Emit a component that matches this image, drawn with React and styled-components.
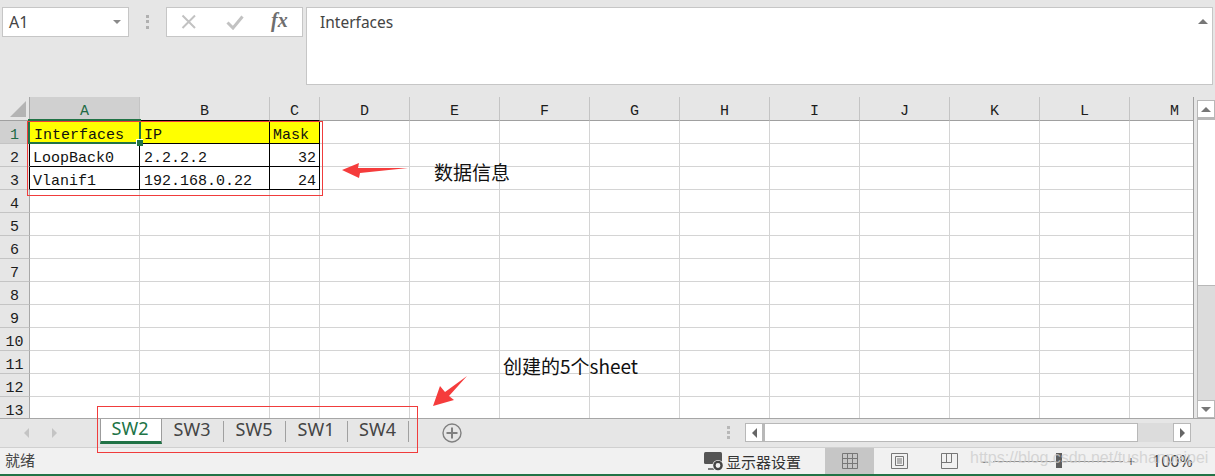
import React from "react";
import styled, { createGlobalStyle } from "styled-components";

const columns = [
  { label: "A", width: 110, active: true },
  { label: "B", width: 130, table: true },
  { label: "C", width: 50, table: true },
  { label: "D", width: 90 },
  { label: "E", width: 90 },
  { label: "F", width: 90 },
  { label: "G", width: 90 },
  { label: "H", width: 90 },
  { label: "I", width: 90 },
  { label: "J", width: 90 },
  { label: "K", width: 90 },
  { label: "L", width: 90 },
  { label: "M", width: 90 },
];

const tableRows = [
  [{ text: "Interfaces", fill: true, pad: 4 }, { text: "IP", fill: true, pad: 4 }, { text: "Mask", fill: true }],
  [{ text: "LoopBack0" }, { text: "2.2.2.2", pad: 4 }, { text: "32", right: true }],
  [{ text: "Vlanif1" }, { text: "192.168.0.22", pad: 4 }, { text: "24", right: true }],
];

const rowNumbers = [1, 2, 3, 4, 5, 6, 7, 8, 9, 10, 11, 12, 13];
const sheets = ["SW2", "SW3", "SW5", "SW1", "SW4"];

const GlobalStyle = createGlobalStyle`
  html, body {
    margin: 0;
    padding: 0;
    background: #e6e6e6;
  }
  * {
    box-sizing: border-box;
  }
`;

const Window = styled.div`
  position: relative;
  width: 1215px;
  height: 476px;
  overflow: hidden;
  display: flex;
  flex-direction: column;
  background: #e6e6e6;
  font-family: "Noto Sans", "Noto Sans CJK SC", sans-serif;
`;

const FormulaBar = styled.div`
  height: 97px;
  flex-shrink: 0;
  display: flex;
  align-items: flex-start;
  padding: 7px 2px 0 2px;
`;

const NameBox = styled.div`
  width: 127px;
  height: 30px;
  background: #fff;
  border: 1px solid #c6c6c6;
  display: flex;
  align-items: center;
  justify-content: space-between;
  padding: 0 7px 0 6px;
  font-size: 16px;
  color: #444;
`;

const DownCaret = styled.span`
  border-left: 4px solid transparent;
  border-right: 4px solid transparent;
  border-top: 4px solid #8a8a8a;
`;

const Grip = styled.div`
  width: 3px;
  height: 14px;
  margin: 8px 17px 0 17px;
  flex-shrink: 0;
  background: repeating-linear-gradient(#b0b0b0 0 3px, transparent 3px 5.5px);
`;

const FormulaButtons = styled.div`
  width: 137px;
  height: 30px;
  background: #fff;
  border: 1px solid #c6c6c6;
  display: flex;
  align-items: center;
  padding-left: 14px;
  gap: 29px;
`;

const FxLabel = styled.span`
  font-family: "Liberation Serif", serif;
  font-style: italic;
  font-weight: bold;
  font-size: 20px;
  color: #6e6e6e;
  margin-left: -2px;
  margin-top: -3px;
`;

const FormulaInput = styled.div`
  position: relative;
  width: 907px;
  height: 78px;
  margin-left: 3px;
  background: #fff;
  border: 1px solid #c6c6c6;
  padding: 4px 13px;
  font-size: 15.5px;
  line-height: 20px;
  color: #444;
`;

const CollapseCaret = styled.span`
  position: absolute;
  top: 11px;
  right: 4px;
  border-left: 5px solid transparent;
  border-right: 5px solid transparent;
  border-bottom: 5px solid #777;
`;

const Body = styled.div`
  height: 321px;
  flex-shrink: 0;
  display: flex;
`;

const Sheet = styled.div`
  width: 1194px;
  flex-shrink: 0;
  overflow: hidden;
  border-right: 1px solid #a0a0a0;
`;

const Row = styled.div`
  display: flex;
  height: ${(p) => p.$height}px;
`;

const Corner = styled.div`
  position: relative;
  width: 30px;
  flex-shrink: 0;
  border-right: 1px solid #a8a8a8;
  border-bottom: 1px solid #a0a0a0;
  &::after {
    content: "";
    position: absolute;
    right: 3px;
    bottom: 3px;
    border-left: 16px solid transparent;
    border-bottom: 16px solid #b4b4b4;
  }
`;

const ColumnHead = styled.div`
  width: ${(p) => p.$width}px;
  flex-shrink: 0;
  display: flex;
  align-items: center;
  justify-content: center;
  padding-top: 5px;
  font-family: "Liberation Mono", monospace;
  font-size: 15px;
  color: ${(p) => (p.$active ? "#1f6b45" : "#1c1c1c")};
  background: ${(p) => (p.$active ? "#d0d0d0" : "transparent")};
  border-right: 1px solid #c4c4c4;
  border-bottom: 1px solid ${(p) => (p.$active ? "#217346" : p.$table ? "#000" : "#a0a0a0")};
`;

const RowHead = styled.div`
  width: 30px;
  flex-shrink: 0;
  display: flex;
  align-items: center;
  justify-content: center;
  padding-top: 6px;
  font-family: "Liberation Mono", monospace;
  font-size: 15px;
  color: ${(p) => (p.$active ? "#1f6b45" : "#1c1c1c")};
  background: ${(p) => (p.$active ? "#d0d0d0" : "#e6e6e6")};
  border-right: 1px solid ${(p) => (p.$table ? "#000" : "#a8a8a8")};
  border-bottom: 1px solid #c4c4c4;
`;

const Cell = styled.div`
  position: relative;
  width: ${(p) => p.$width}px;
  flex-shrink: 0;
  display: flex;
  align-items: center;
  justify-content: ${(p) => (p.$right ? "flex-end" : "flex-start")};
  padding: 6px ${(p) => (p.$right ? 3 : 0)}px 0 ${(p) => p.$pad}px;
  font-family: "Liberation Mono", monospace;
  font-size: 15px;
  white-space: pre;
  color: #111;
  background: ${(p) => (p.$fill ? "#ffff00" : "#fff")};
  border-right: 1px solid ${(p) => (p.$table ? "#000" : "#d4d4d4")};
  border-bottom: 1px solid ${(p) => (p.$table ? "#000" : "#d4d4d4")};
`;

const Selection = styled.div`
  position: absolute;
  left: 28px;
  top: 119px;
  width: 113px;
  height: 25px;
  border: 2px solid #217346;
  pointer-events: none;
  &::after {
    content: "";
    position: absolute;
    right: -4px;
    bottom: -4px;
    width: 6px;
    height: 6px;
    background: #217346;
    border: 1px solid #fff;
    border-right: 0;
    border-bottom: 0;
  }
`;

const ScrollColumn = styled.div`
  width: 18px;
  margin-left: 3px;
  margin-top: 3px;
  display: flex;
  flex-direction: column;
  background: #dcdcdc;
  border-left: 1px solid #b8b8b8;
`;

const ScrollButton = styled.div`
  display: flex;
  align-items: center;
  justify-content: center;
  flex-shrink: 0;
  background: #fff;
  width: ${(p) => p.$width || 18}px;
  height: ${(p) => p.$height || 18}px;
  border: 1px solid #b8b8b8;
  border-left-width: ${(p) => (p.$flush ? 0 : 1)}px;
`;

const VerticalThumb = styled.div`
  height: 168px;
  background: #fff;
  border-top: 2px solid #b8b8b8;
  border-bottom: 1px solid #b8b8b8;
`;

const ScrollFill = styled.div`
  flex: 1;
`;

const Arrow = styled.span`
  border-style: solid;
  border-color: transparent;
  ${(p) => p.$dir === "up" && "border-width: 0 5px 5px 5px; border-bottom-color: #777;"}
  ${(p) => p.$dir === "down" && "border-width: 5px 5px 0 5px; border-top-color: #777;"}
  ${(p) => p.$dir === "left" && `border-width: 5px 5px 5px 0; border-right-color: ${p.$color || "#666"};`}
  ${(p) => p.$dir === "right" && `border-width: 5px 0 5px 5px; border-left-color: ${p.$color || "#666"};`}
`;

const TabBar = styled.div`
  height: 29px;
  flex-shrink: 0;
  display: flex;
  align-items: flex-start;
  border-top: 1px solid #a6a6a6;
`;

const TabNav = styled.div`
  width: 100px;
  flex-shrink: 0;
  display: flex;
  align-items: center;
  gap: 23px;
  height: 28px;
  padding-left: 24px;
`;

const Tabs = styled.div`
  display: flex;
  height: 25px;
`;

const Tab = styled.div`
  position: relative;
  width: ${(p) => (p.$last ? 61 : 62)}px;
  height: 25px;
  display: flex;
  align-items: center;
  justify-content: center;
  padding: 0 2px 5px 0;
  font-size: 18px;
  color: ${(p) => (p.$active ? "#217346" : "#444")};
  background: ${(p) => (p.$active ? "#fff" : "transparent")};
  border-left: ${(p) => (p.$active ? "1px solid #9c9c9c" : "0")};
  border-right: ${(p) => (p.$active ? "1px solid #9c9c9c" : "0")};
  border-bottom: ${(p) => (p.$active ? "3px solid #217346" : "0")};
  &::after {
    content: "";
    display: ${(p) => (p.$active ? "none" : "block")};
    position: absolute;
    right: 0;
    top: 2px;
    width: 1px;
    height: 21px;
    background: #a0a0a0;
  }
`;

const AddSheet = styled.div`
  width: 20px;
  height: 20px;
  margin: 4px 0 0 33px;
  flex-shrink: 0;
  color: #777;
`;

const SplitDots = styled(Grip)`
  width: 3px;
  height: 13px;
  margin: 7px 15px 0 265px;
  background: repeating-linear-gradient(#b8b8b8 0 3px, transparent 3px 5px);
`;

const HorizontalScroll = styled.div`
  width: 446px;
  height: 19px;
  margin-top: 4px;
  display: flex;
  background: #dcdcdc;
`;

const HorizontalThumb = styled.div`
  width: 375px;
  background: #fff;
  border: 1px solid #b8b8b8;
  border-left-width: 2px;
`;

const StatusBar = styled.div`
  height: 27px;
  flex-shrink: 0;
  display: flex;
  align-items: center;
  background: #f1f1f1;
  border-top: 1px solid #d0d0d0;
  font-size: 15px;
  color: #444;
`;

const StatusLabel = styled.div`
  padding-left: 5px;
  padding-bottom: 3px;
  width: 704px;
  flex-shrink: 0;
`;

const Monitor = styled.div`
  display: flex;
  align-items: center;
  width: 121px;
  flex-shrink: 0;
  gap: 1px;
  font-size: 15px;
  color: #333;
`;

const ViewButton = styled.div`
  width: ${(p) => p.$width}px;
  height: 26px;
  flex-shrink: 0;
  display: flex;
  align-items: center;
  justify-content: center;
  background: ${(p) => (p.$active ? "#c6c6c6" : "transparent")};
`;

const ZoomControl = styled.div`
  display: flex;
  align-items: center;
  margin-left: 6px;
  font-size: 16px;
  color: #444;
`;

const ZoomGlyph = styled.span`
  width: 10px;
  color: #666;
  text-align: center;
  font-size: 14px;
`;

const ZoomTrack = styled.div`
  position: relative;
  width: 130px;
  height: 1px;
  margin: 0 3px;
  background: #8c8c8c;
  &::after {
    content: "";
    position: absolute;
    left: 63px;
    top: -8px;
    width: 6px;
    height: 15px;
    background: #5e5e5e;
  }
`;

const ZoomValue = styled.span`
  margin-left: 16px;
`;

const GreenEdge = styled.div`
  height: 2px;
  flex-shrink: 0;
  background: #217346;
`;

const RedBox = styled.div`
  position: absolute;
  left: ${(p) => p.$x}px;
  top: ${(p) => p.$y}px;
  width: ${(p) => p.$w}px;
  height: ${(p) => p.$h}px;
  border: 1px solid #f03c3c;
  pointer-events: none;
`;

const RedArrow = styled.svg`
  position: absolute;
  left: ${(p) => p.$x}px;
  top: ${(p) => p.$y}px;
  pointer-events: none;
`;

const Note = styled.div`
  position: absolute;
  left: ${(p) => p.$x}px;
  top: ${(p) => p.$y}px;
  font-family: "Noto Sans CJK SC", "Noto Sans", sans-serif;
  font-size: 19px;
  line-height: 24px;
  white-space: nowrap;
  color: #111;
`;

const Watermark = styled.div`
  position: absolute;
  left: 970px;
  top: 446px;
  font-family: "Liberation Sans", sans-serif;
  font-size: 16px;
  line-height: 24px;
  white-space: nowrap;
  color: rgba(205, 205, 205, 0.8);
  pointer-events: none;
`;

function CloseIcon() {
  return (
    <svg width="16" height="16" viewBox="0 0 16 16">
      <path d="M1.5 1.5 14 14M14 1.5 1.5 14" stroke="#c2c2c2" strokeWidth="2" fill="none" />
    </svg>
  );
}

function CheckIcon() {
  return (
    <svg width="18" height="16" viewBox="0 0 18 16">
      <path d="M1.5 8.5 7 14 16.5 2.5" stroke="#c2c2c2" strokeWidth="3" fill="none" />
    </svg>
  );
}

function PlusCircle() {
  return (
    <svg width="20" height="20" viewBox="0 0 20 20">
      <circle cx="10" cy="10" r="9" stroke="#808080" strokeWidth="1.4" fill="none" />
      <path d="M10 4.5v11M4.5 10h11" stroke="#808080" strokeWidth="2" />
    </svg>
  );
}

function MonitorIcon() {
  return (
    <svg width="21" height="20" viewBox="0 0 21 20">
      <rect x="0" y="1" width="18" height="12" rx="1.5" fill="#555" />
      <path d="M4 18h6" stroke="#555" strokeWidth="1.5" />
      <circle cx="14" cy="14.5" r="5.5" fill="#f1f1f1" />
      <circle cx="14" cy="14.5" r="3.6" fill="none" stroke="#444" strokeWidth="2.4" />
    </svg>
  );
}

function NormalView() {
  return (
    <svg width="16" height="16" viewBox="0 0 16 16">
      <path d="M.5.5h15v15H.5zM.5 5.5h15M.5 10.5h15M5.5.5v15M10.5.5v15" stroke="#777" fill="none" />
    </svg>
  );
}

function PageView() {
  return (
    <svg width="17" height="16" viewBox="0 0 17 16">
      <path d="M.5.5h16v15H.5z" stroke="#777" fill="none" />
      <path d="M4.5 3.5h8v9h-8zM6 6h5M6 8h5M6 10h5" stroke="#777" fill="none" />
    </svg>
  );
}

function BreakView() {
  return (
    <svg width="17" height="16" viewBox="0 0 17 16">
      <path d="M.5.5h16v15H.5zM.5 9.5h10M5.5.5v9M10.5.5v9" stroke="#777" fill="none" />
    </svg>
  );
}

export default function App() {
  return (
    <Window>
      <GlobalStyle />
      <FormulaBar>
        <NameBox>
          A1
          <DownCaret />
        </NameBox>
        <Grip />
        <FormulaButtons>
          <CloseIcon />
          <CheckIcon />
          <FxLabel>fx</FxLabel>
        </FormulaButtons>
        <FormulaInput>
          Interfaces
          <CollapseCaret />
        </FormulaInput>
      </FormulaBar>

      <Body>
        <Sheet>
          <Row $height={24}>
            <Corner />
            {columns.map((col) => (
              <ColumnHead key={col.label} $width={col.width} $active={col.active} $table={col.table}>
                {col.label}
              </ColumnHead>
            ))}
          </Row>
          {rowNumbers.map((num, r) => (
            <Row key={num} $height={23}>
              <RowHead $active={r === 0} $table={r < 3}>
                {num}
              </RowHead>
              {columns.map((col, c) => {
                const data = tableRows[r] && tableRows[r][c];
                return (
                  <Cell
                    key={col.label}
                    $width={col.width}
                    $table={Boolean(data)}
                    $fill={data && data.fill}
                    $right={data && data.right}
                    $pad={data && data.pad ? data.pad : 3}
                  >
                    {data ? data.text : null}
                  </Cell>
                );
              })}
            </Row>
          ))}
        </Sheet>
        <ScrollColumn>
          <ScrollButton $width={17} $height={18} $flush>
            <Arrow $dir="up" />
          </ScrollButton>
          <VerticalThumb />
          <ScrollFill />
          <ScrollButton $width={17} $height={18} $flush>
            <Arrow $dir="down" />
          </ScrollButton>
        </ScrollColumn>
      </Body>

      <TabBar>
        <TabNav>
          <Arrow $dir="left" $color="#c4c4c4" />
          <Arrow $dir="right" $color="#c4c4c4" />
        </TabNav>
        <Tabs>
          {sheets.map((name, i) => (
            <Tab key={name} $active={i === 0} $last={i === sheets.length - 1}>
              {name}
            </Tab>
          ))}
        </Tabs>
        <AddSheet>
          <PlusCircle />
        </AddSheet>
        <SplitDots />
        <HorizontalScroll>
          <ScrollButton $width={18} $height={19}>
            <Arrow $dir="left" />
          </ScrollButton>
          <HorizontalThumb />
          <ScrollFill />
          <ScrollButton $width={18} $height={19}>
            <Arrow $dir="right" />
          </ScrollButton>
        </HorizontalScroll>
      </TabBar>

      <StatusBar>
        <StatusLabel>就绪</StatusLabel>
        <Monitor>
          <MonitorIcon />
          显示器设置
        </Monitor>
        <ViewButton $width={49} $active>
          <NormalView />
        </ViewButton>
        <ViewButton $width={50}>
          <PageView />
        </ViewButton>
        <ViewButton $width={50}>
          <BreakView />
        </ViewButton>
        <ZoomControl>
          <ZoomGlyph>−</ZoomGlyph>
          <ZoomTrack />
          <ZoomGlyph>+</ZoomGlyph>
          <ZoomValue>100%</ZoomValue>
        </ZoomControl>
      </StatusBar>
      <GreenEdge />

      <Selection />
      <RedBox $x={27} $y={121} $w={296} $h={75} />
      <RedBox $x={97} $y={406} $w={321} $h={47} />
      <RedArrow $x={340} $y={162} width="70" height="18" viewBox="0 0 70 18">
        <path d="M2 8 19 1 18 6 68 6 20 11 19 16Z" fill="#f53c3c" />
      </RedArrow>
      <RedArrow $x={432} $y={375} width="36" height="32" viewBox="0 0 36 32">
        <path d="M1 31 8 11 13 17 35 1 17 21 22 25Z" fill="#f53c3c" />
      </RedArrow>
      <Note $x={434} $y={160}>数据信息</Note>
      <Note $x={503} $y={354}>创建的5个sheet</Note>
      <Watermark>https://blog.csdn.net/tushanpeipei</Watermark>
    </Window>
  );
}
